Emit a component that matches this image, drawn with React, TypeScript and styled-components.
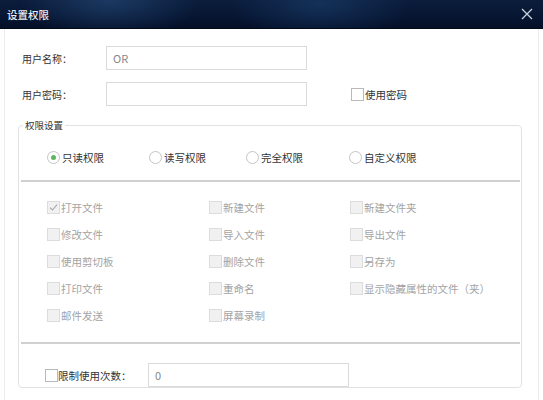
import React from 'react';
import styled, { createGlobalStyle } from 'styled-components';

const GlobalStyle = createGlobalStyle`
  html, body {
    margin: 0;
    padding: 0;
    background: #fff;
  }
  body {
    font-family: "Noto Sans CJK SC", "Noto Sans", "Liberation Sans", sans-serif;
    font-size: 10.5px;
    color: #333;
  }
`;

const Dialog = styled.div`
  width: 543px;
  height: 400px;
  overflow: hidden;
  background: #fff;
  display: flex;
  flex-direction: column;
`;

const TitleBar = styled.div`
  height: 28px;
  flex: none;
  display: flex;
  align-items: center;
  justify-content: space-between;
  padding: 0 10px 0 7px;
  background:
    radial-gradient(ellipse 90px 40px at 110px 0px, rgba(40, 80, 130, 0.55), transparent),
    radial-gradient(ellipse 90px 40px at 320px 4px, rgba(30, 70, 120, 0.5), transparent),
    linear-gradient(180deg, #0b1d3c 0%, #061430 70%, #041027 100%);
  border-bottom: 1px solid #020a1a;
`;

const Title = styled.span`
  color: #e9eef5;
  font-size: 10.5px;
  font-weight: 500;
`;

const CloseButton = styled.button`
  border: none;
  background: none;
  padding: 0;
  width: 12px;
  height: 12px;
  display: flex;
  cursor: pointer;
`;

const Body = styled.div`
  flex: 1;
  margin: 0 4px;
  padding: 17px 16px 0 13px;
  border-left: 1px solid #ececec;
  border-right: 1px solid #ececec;
`;

const FieldRow = styled.div`
  display: flex;
  align-items: center;
  height: 24px;
  margin-bottom: 12px;
`;

const Label = styled.label`
  width: 84px;
  padding-left: 4px;
  color: #333;
  font-size: 10px;
`;

const TextInput = styled.input<{ $width: number }>`
  box-sizing: border-box;
  width: ${({ $width }) => $width}px;
  height: 24px;
  border: 1px solid #dadada;
  padding: 0 6px;
  font-family: inherit;
  font-size: 11px;
  color: #888;
  background: #fff;
  outline: none;
`;

const CheckOption = styled.label<{ $disabled?: boolean; $offset?: number }>`
  display: inline-flex;
  align-items: center;
  gap: 1px;
  margin-left: ${({ $offset }) => $offset || 0}px;
  color: ${({ $disabled }) => ($disabled ? '#a3a3a3' : '#333')};
  white-space: nowrap;
`;

const Box = styled.span<{ $disabled?: boolean }>`
  box-sizing: border-box;
  width: 13px;
  height: 13px;
  border: 1px solid ${({ $disabled }) => ($disabled ? '#dcdcdc' : '#b9b9b9')};
  background: ${({ $disabled }) => ($disabled ? '#f1f1f1' : '#fff')};
  display: inline-flex;
  align-items: center;
  justify-content: center;
`;

const Group = styled.fieldset`
  margin: 4px 0 0;
  padding: 0;
  border: 1px solid #e2e2e2;
  border-radius: 4px;
  min-width: 0;
`;

const Legend = styled.legend`
  margin-left: 4px;
  padding: 0 2px;
  color: #333;
  font-size: 9.5px;
  line-height: 14px;
`;

const RadioRow = styled.div`
  display: grid;
  grid-template-columns: 102px 97px 103px auto;
  align-items: center;
  height: 46px;
  padding: 2px 0 0 26px;
  margin: 0 1px 0 2px;
  border-bottom: 2px solid #d0d0d0;
`;

const RadioOption = styled.label`
  display: inline-flex;
  align-items: center;
  gap: 2px;
  color: #333;
`;

const RadioCircle = styled.span<{ $checked?: boolean }>`
  box-sizing: border-box;
  width: 13px;
  height: 13px;
  border-radius: 50%;
  border: 1px solid #c4c4c4;
  background: #fff;
  display: inline-flex;
  align-items: center;
  justify-content: center;

  &::after {
    content: '';
    width: 5px;
    height: 5px;
    border-radius: 50%;
    background: ${({ $checked }) => ($checked ? '#5cb85c' : 'transparent')};
  }
`;

const CheckGrid = styled.div`
  display: grid;
  grid-template-columns: 162px 141px auto;
  grid-auto-rows: 27px;
  align-items: center;
  padding: 12px 0 13px 26px;
  margin: 0 1px 0 2px;
  border-bottom: 2px solid #d0d0d0;
`;

const LimitRow = styled.div`
  display: flex;
  align-items: center;
  padding: 19px 0 0 26px;
  height: 24px;
`;

const LimitLabel = styled.span`
  width: 90px;
  color: #333;
`;

const CheckMark = () => (
  <svg width="9" height="9" viewBox="0 0 9 9">
    <path d="M1 4.6 L3.5 7 L8 1.6" fill="none" stroke="#a8a8a8" strokeWidth="1.1" />
  </svg>
);

const Checkbox: React.FC<{ label: string; checked?: boolean; disabled?: boolean; offset?: number }> = ({
  label,
  checked,
  disabled,
  offset,
}) => (
  <CheckOption $disabled={disabled} $offset={offset}>
    <Box $disabled={disabled}>{checked && <CheckMark />}</Box>
    {label}
  </CheckOption>
);

const radios = ['只读权限', '读写权限', '完全权限', '自定义权限'];

const perms = [
  '打开文件', '新建文件', '新建文件夹',
  '修改文件', '导入文件', '导出文件',
  '使用剪切板', '删除文件', '另存为',
  '打印文件', '重命名', '显示隐藏属性的文件（夹）',
  '邮件发送', '屏幕录制',
];

export default function App() {
  return (
    <Dialog>
      <GlobalStyle />
      <TitleBar>
        <Title>设置权限</Title>
        <CloseButton aria-label="close">
          <svg width="12" height="12" viewBox="0 0 12 12">
            <path d="M1 1 L11 11 M11 1 L1 11" stroke="#c9d2de" strokeWidth="1.3" />
          </svg>
        </CloseButton>
      </TitleBar>
      <Body>
        <FieldRow>
          <Label>用户名称：</Label>
          <TextInput $width={201} defaultValue="OR" />
        </FieldRow>
        <FieldRow>
          <Label>用户密码：</Label>
          <TextInput $width={201} type="text" />
          <Checkbox label="使用密码" offset={44} />
        </FieldRow>
        <Group>
          <Legend>权限设置</Legend>
          <RadioRow>
            {radios.map((r, i) => (
              <RadioOption key={r}>
                <RadioCircle $checked={i === 0} />
                {r}
              </RadioOption>
            ))}
          </RadioRow>
          <CheckGrid>
            {perms.map((p, i) => (
              <Checkbox key={p} label={p} checked={i === 0} disabled />
            ))}
          </CheckGrid>
          <LimitRow>
            <Checkbox label="" />
            <LimitLabel>限制使用次数：</LimitLabel>
            <TextInput $width={201} defaultValue="0" />
          </LimitRow>
        </Group>
      </Body>
    </Dialog>
  );
}
